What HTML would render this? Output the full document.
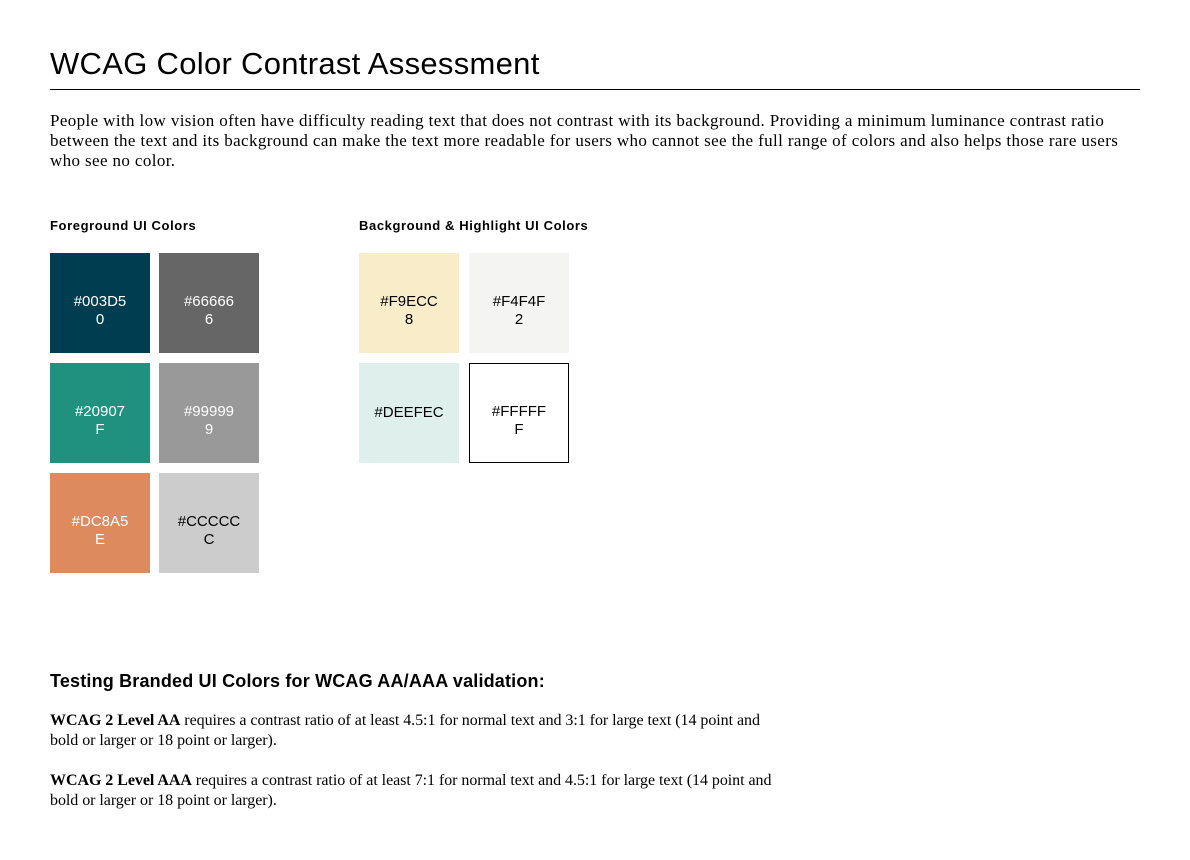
<!DOCTYPE html>
<html><head><style>
body{margin:0;background:#fff;width:1190px;height:860px;position:relative;font-family:"Liberation Sans",sans-serif;color:#000}
h1{position:absolute;left:50px;top:46px;margin:0;font-weight:400;font-size:31px;line-height:36px;letter-spacing:0.3px}
.rule{position:absolute;left:50px;top:89px;width:1090px;height:1px;background:#000}
.intro{position:absolute;left:50px;top:111px;width:1140px;font-family:"Liberation Serif",serif;font-size:17px;line-height:20px;margin:0;letter-spacing:0.38px;white-space:nowrap}
.lab{position:absolute;top:218px;font-size:13px;font-weight:700;margin:0;letter-spacing:0.6px}
.sw{position:absolute;width:100px;height:100px;box-sizing:border-box;display:flex;align-items:center;justify-content:center;text-align:center;font-size:15px;line-height:18px}
.t{padding-top:16px}
h2{position:absolute;left:50px;top:671px;margin:0;font-size:18px;font-weight:700;letter-spacing:0.18px}
.p{position:absolute;left:50px;width:840px;font-family:"Liberation Serif",serif;font-size:16px;line-height:20px;margin:0;letter-spacing:-0.05px;white-space:nowrap}
</style></head><body>
<h1>WCAG Color Contrast Assessment</h1>
<div class="rule"></div>
<p class="intro">People with low vision often have difficulty reading text that does not contrast with its background. Providing a minimum luminance contrast ratio<br>between the text and its background can make the text more readable for users who cannot see the full range of colors and also helps those rare users<br>who see no color.</p>
<p class="lab" style="left:50px">Foreground UI Colors</p>
<p class="lab" style="left:359px">Background &amp; Highlight UI Colors</p>
<div class="sw t" style="left:50px;top:253px;background:#003D50;color:#fff">#003D5<br>0</div>
<div class="sw t" style="left:159px;top:253px;background:#666666;color:#fff">#66666<br>6</div>
<div class="sw t" style="left:50px;top:363px;background:#20907F;color:#fff">#20907<br>F</div>
<div class="sw t" style="left:159px;top:363px;background:#999999;color:#fff">#99999<br>9</div>
<div class="sw t" style="left:50px;top:473px;background:#DC8A5E;color:#fff">#DC8A5<br>E</div>
<div class="sw t" style="left:159px;top:473px;background:#CCCCCC;color:#000">#CCCCC<br>C</div>
<div class="sw t" style="left:359px;top:253px;background:#F9ECC8">#F9ECC<br>8</div>
<div class="sw t" style="left:469px;top:253px;background:#F4F4F2">#F4F4F<br>2</div>
<div class="sw" style="left:359px;top:363px;background:#DEEFEC">#DEEFEC</div>
<div class="sw t" style="left:469px;top:363px;background:#fff;border:1px solid #000">#FFFFF<br>F</div>
<h2>Testing Branded UI Colors for WCAG AA/AAA validation:</h2>
<p class="p" style="top:711px"><b>WCAG 2 Level AA</b> requires a contrast ratio of at least 4.5:1 for normal text and 3:1 for large text (14 point and<br>bold or larger or 18 point or larger).</p>
<p class="p" style="top:771px"><b>WCAG 2 Level AAA</b> requires a contrast ratio of at least 7:1 for normal text and 4.5:1 for large text (14 point and<br>bold or larger or 18 point or larger).</p>
</body></html>
